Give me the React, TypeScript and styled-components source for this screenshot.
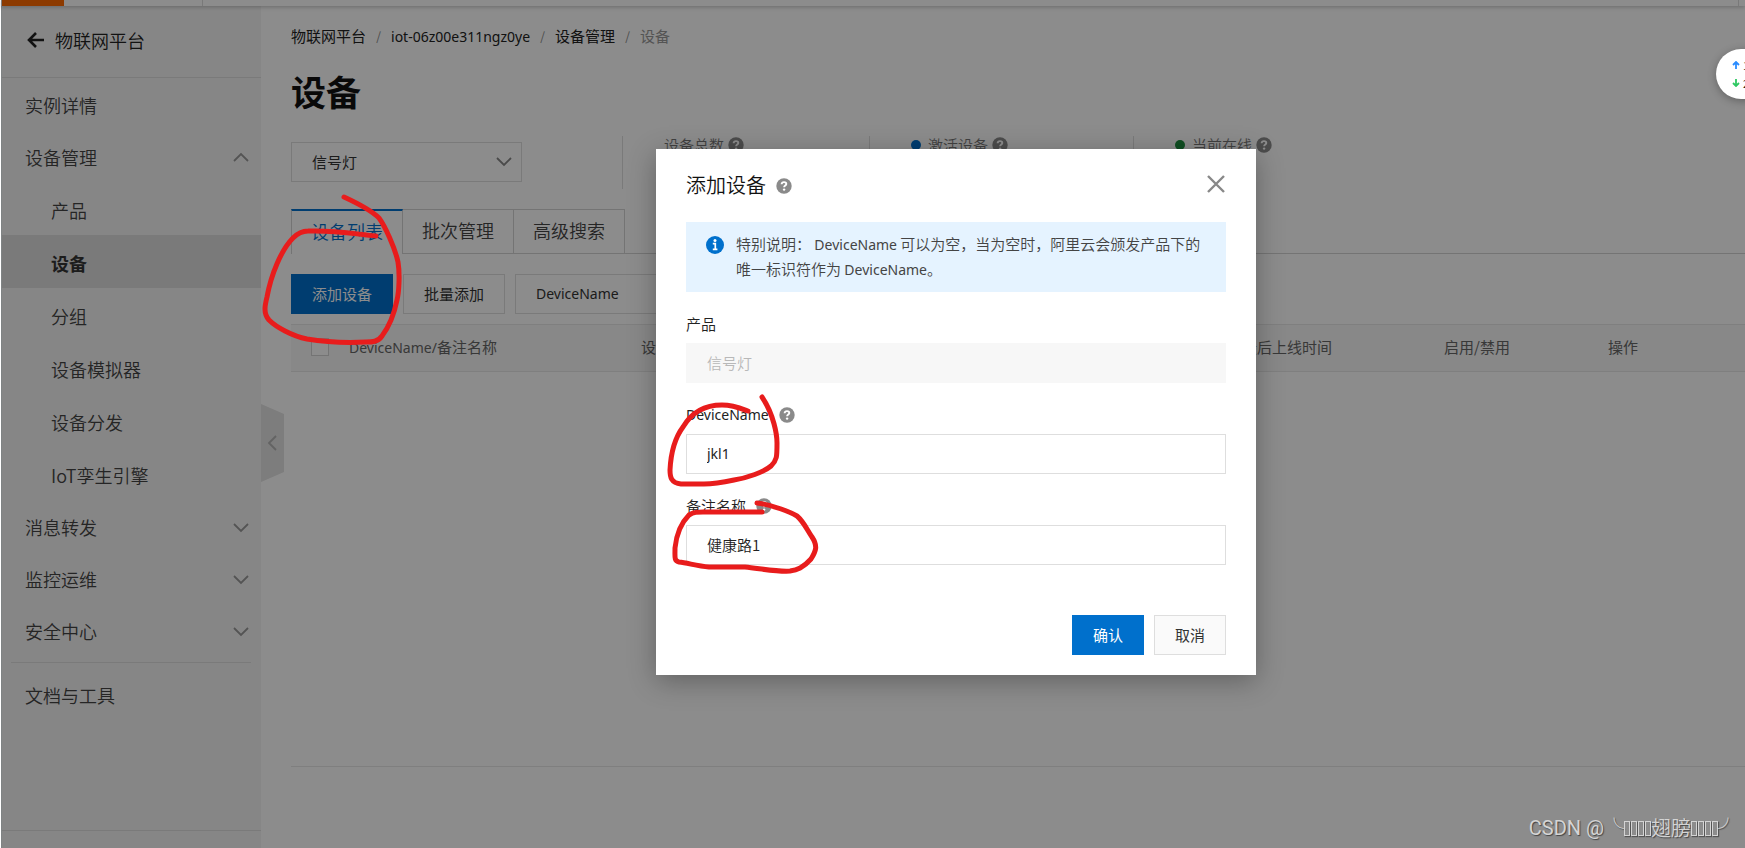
import React, { useState } from 'react';
import styled, { createGlobalStyle, css } from 'styled-components';

const GlobalStyle = createGlobalStyle`
  *, *::before, *::after { box-sizing: border-box; }
  body {
    margin: 0;
    background: #fff;
    color: #222;
    font-family: "Noto Sans CJK SC", sans-serif;
    font-size: 15px;
    font-weight: 350;
    line-height: 24px;
  }
  button, input, select { font: inherit; color: inherit; margin: 0; }
  a { color: inherit; text-decoration: none; }
  h1, h2, p, ul { margin: 0; padding: 0; }
  ul { list-style: none; }
`;

/* ---------- shared ---------- */

const Latin = styled.span`
  font-family: "Noto Sans", sans-serif;
  font-size: 14px;
  font-weight: 400;
  line-height: 1;
`;

const Badge = styled.span`
  display: inline-flex;
  flex: none;
  color: #8a8a8a;
  svg { display: block; }
`;

function HelpIcon({ label }: { label: string }) {
  return (
    <Badge role="img" aria-label={label}>
      <svg width="16" height="16" viewBox="0 0 16 16">
        <circle cx="8" cy="8" r="7.7" fill="currentColor" />
        <path d="M5.600 6.200c.1-1.400 1-2.100 2.400-2.100 1.400 0 2.300.8 2.300 1.900 0 1.500-2.200 1.600-2.200 3.300" fill="none" stroke="#fff" strokeWidth="1.900" />
        <circle cx="8.100" cy="11.600" r="1.200" fill="#fff" />
      </svg>
    </Badge>
  );
}

function Chevron({ dir }: { dir: 'up' | 'down' | 'left' }) {
  const d = { up: 'M1 9 8 2l7 7', down: 'M1 2l7 7 7-7', left: 'M9 1 2 8l7 7' }[dir];
  const side = dir === 'left';
  return (
    <svg width={side ? 11 : 16} height={side ? 16 : 11} viewBox={side ? '0 0 11 16' : '0 0 16 11'} aria-hidden="true">
      <path d={d} fill="none" stroke="currentColor" strokeWidth="1.800" />
    </svg>
  );
}

const Button = styled.button<{ $primary?: boolean; $soft?: boolean }>`
  height: 40px;
  padding: 0 20px;
  border: 1px solid ${p => (p.$primary ? '#0070cc' : '#dedede')};
  background: ${p => (p.$primary ? '#0070cc' : p.$soft ? '#fafafa' : 'transparent')};
  color: ${p => (p.$primary ? '#fff' : '#333')};
  font-weight: 400;
  white-space: nowrap;
  cursor: pointer;
`;

/* ---------- page frame ---------- */

const Page = styled.div`
  position: relative;
  display: flex;
  flex-direction: column;
  min-height: 100vh;
  padding-left: 1px;
  overflow: hidden;
`;

const TopBar = styled.header`
  position: relative;
  display: flex;
  justify-content: space-between;
  height: 6px;
  padding-right: 6px;
  border-left: 1px solid #e6e6e6;
  box-shadow: 0 1px 4px rgba(0, 0, 0, 0.25);
  z-index: 1;
`;

const BrandCell = styled.div`
  width: 201px;
  border-right: 1px solid #dcdcdc;
  &::before {
    content: "";
    display: block;
    width: 62px;
    height: 6px;
    background: #ff6a00;
  }
`;

const UserCell = styled.div`
  border-right: 1px solid #dcdcdc;
`;

const Body = styled.div`
  display: flex;
  flex: 1;
`;

/* ---------- sidebar ---------- */

const Sidebar = styled.nav`
  position: relative;
  display: flex;
  flex-direction: column;
  flex: none;
  width: 260px;
  background: #f5f5f5;
  border-left: 1px solid #e8eef0;
  color: #444;
  font-size: 18px;
`;

const SideTitle = styled.a`
  display: flex;
  align-items: center;
  gap: 10px;
  height: 72px;
  padding: 0 0 3px 25px;
  border-bottom: 1px solid #dedede;
  color: #222;
`;

const SideLink = styled.a<{ $sub?: boolean; $active?: boolean }>`
  display: flex;
  align-items: center;
  justify-content: space-between;
  height: ${p => (p.$sub ? 53 : 52)}px;
  padding: 2px 12px 0 ${p => (p.$sub ? 49 : 23)}px;
  ${p => p.$active && css`
    background: #dedede;
    color: #333;
    font-weight: 700;
  `}
  svg { color: #999; }
`;

const SideRule = styled.hr`
  width: 240px;
  margin: 6px 0 5px 9px;
  border: 0;
  border-top: 1px solid #dedede;
`;

const SideFoot = styled.div`
  height: 18px;
  margin-top: auto;
  border-top: 1px solid #dedede;
`;

const Collapse = styled.button`
  position: absolute;
  top: 398px;
  left: 100%;
  width: 23px;
  height: 78px;
  padding: 0;
  border: 0;
  background: #e3e3e3;
  color: #b4b4b4;
  clip-path: polygon(0 0, 100% 10px, 100% 68px, 0 100%);
`;

const menu = [
  { text: '实例详情' },
  { text: '设备管理', arrow: 'up' as const },
  { text: '产品', sub: true },
  { text: '设备', sub: true, active: true },
  { text: '分组', sub: true },
  { text: '设备模拟器', sub: true },
  { text: '设备分发', sub: true },
  { text: 'IoT孪生引擎', sub: true },
  { text: '消息转发', arrow: 'down' as const },
  { text: '监控运维', arrow: 'down' as const },
  { text: '安全中心', arrow: 'down' as const },
];

/* ---------- main ---------- */

const Main = styled.main`
  flex: 1;
  min-width: 0;
  padding: 18px 0 0 30px;
`;

const Crumbs = styled.nav`
  display: flex;
  align-items: center;
  height: 24px;
  font-weight: 400;
  a:last-child { color: #999; }
`;

const Slash = styled.span`
  width: 25px;
  color: #888;
  font-size: 12px;
  text-align: center;
`;

const Title = styled.h1`
  margin-top: 20px;
  color: #111;
  font-size: 35px;
  font-weight: 700;
  line-height: 46px;
`;

const Overview = styled.div`
  display: flex;
  align-items: flex-start;
  margin-top: 22px;
`;

const SelectBox = styled.div<{ $width: number }>`
  position: relative;
  width: ${p => p.$width}px;
  height: 40px;
  color: #888;
  svg { position: absolute; right: 10px; top: 14px; pointer-events: none; }
`;

const Select = styled.select<{ $latin?: boolean }>`
  appearance: none;
  width: 100%;
  height: 40px;
  padding: 0 36px 0 20px;
  border: 1px solid #dedede;
  border-radius: 0;
  background: transparent;
  color: #333;
  font-weight: 400;
  ${p => p.$latin && css`
    font-family: "Noto Sans", sans-serif;
    font-size: 14px;
  `}
`;

const OverviewSelect = styled.div`
  width: 331px;
  padding-top: 6px;
`;

const Stat = styled.div`
  height: 53px;
  padding: 0 125px 0 41px;
  border-left: 1px solid #dedede;
`;

const StatLabel = styled.div`
  display: flex;
  align-items: center;
  gap: 4px;
  height: 17px;
  color: #777;
  white-space: nowrap;
`;

const Dot = styled.span<{ $color: string }>`
  width: 10px;
  height: 10px;
  margin-right: 3px;
  border-radius: 50%;
  background: ${p => p.$color};
`;

const Tabs = styled.div`
  display: flex;
  margin-top: 20px;
  &::after {
    content: "";
    flex: 1;
    border-bottom: 1px solid #d4d4d4;
  }
`;

const Tab = styled.button<{ $active?: boolean }>`
  width: 111px;
  height: 45px;
  padding: 0 0 3px;
  border: solid #d4d4d4;
  border-width: 1px 1px 1px 0;
  background: none;
  color: #444;
  font-size: 18px;
  white-space: nowrap;
  cursor: pointer;
  ${p => p.$active && css`
    width: 112px;
    border-width: 2px 1px 0;
    border-top-color: #0070cc;
    color: #0070cc;
  `}
`;

const Toolbar = styled.div`
  display: flex;
  gap: 10px;
  margin: 20px 0 10px;
`;

const Devices = styled.table`
  width: 100%;
  table-layout: fixed;
  border-collapse: collapse;
  th {
    height: 47px;
    padding: 0 0 2px 20px;
    border: solid #e8e8e8;
    border-width: 1px 0;
    background: #f7f7f7;
    color: #666;
    font-weight: 400;
    text-align: left;
    white-space: nowrap;
  }
`;

const Check = styled.input`
  appearance: none;
  display: block;
  width: 18px;
  height: 18px;
  margin: 0;
  border: 1px solid #d4d4d4;
  background: #fff;
`;

const TableEnd = styled.div`
  height: 395px;
  border-bottom: 1px solid #e8e8e8;
`;

/* ---------- dialog ---------- */

const Mask = styled.div`
  position: absolute;
  inset: 0 0 0 1px;
  z-index: 2;
  display: flex;
  align-items: center;
  justify-content: center;
  padding: 0 0 24px 166px;
  background: rgba(0, 0, 0, 0.45);
`;

const Dialog = styled.section`
  width: 600px;
  padding: 20px 30px;
  background: #fff;
  box-shadow: 0 6px 26px rgba(0, 0, 0, 0.3);
`;

const DialogHead = styled.header`
  display: flex;
  align-items: center;
  gap: 10px;
  height: 33px;
  margin-bottom: 20px;
`;

const DialogTitle = styled.h2`
  padding-bottom: 2px;
  color: #111;
  font-size: 20px;
  font-weight: 350;
`;

const Close = styled.button`
  display: flex;
  margin-left: auto;
  padding: 0 0 3px;
  border: 0;
  background: none;
  color: #888;
  cursor: pointer;
`;

const Notice = styled.div`
  display: flex;
  gap: 12px;
  height: 70px;
  padding: 9px 20px 0;
  margin-bottom: 20px;
  background: #e5f3ff;
  color: #444;
  line-height: 25px;
  svg { flex: none; margin-top: 5px; }
`;

const Field = styled.div`
  margin-bottom: 20px;
`;

const FieldLabel = styled.label`
  display: flex;
  align-items: center;
  gap: 10px;
  height: 25px;
  padding-bottom: 1px;
  margin-bottom: 6px;
`;

const TextInput = styled.input<{ $latin?: boolean }>`
  display: block;
  width: 100%;
  height: 40px;
  padding: 0 20px 2px;
  border: 1px solid #dedede;
  background: #fff;
  outline: 0;
  ${p => p.$latin && css`
    font-family: "Noto Sans", sans-serif;
    font-size: 14px;
    font-weight: 400;
  `}
  &:disabled {
    border-color: #f7f7f7;
    background: #f7f7f7;
    color: #b8b8b8;
  }
`;

const DialogFoot = styled.footer`
  display: flex;
  justify-content: flex-end;
  gap: 10px;
  padding-top: 30px;
`;

/* ---------- things floating over the page ---------- */

const SpeedPill = styled.aside`
  position: absolute;
  top: 49px;
  right: -41px;
  z-index: 3;
  display: flex;
  flex-direction: column;
  justify-content: center;
  width: 70px;
  height: 50px;
  padding-left: 16px;
  border-radius: 25px;
  background: #fff;
  box-shadow: 0 2px 8px rgba(0, 0, 0, 0.3);
  font-size: 11px;
  line-height: 18px;
`;

const Speed = styled.div<{ $color: string }>`
  display: flex;
  align-items: center;
  gap: 3px;
  svg { color: ${p => p.$color}; }
`;

const Marks = styled.svg`
  position: absolute;
  top: 0;
  left: 0;
  z-index: 4;
  pointer-events: none;
`;

const Watermark = styled.div`
  position: absolute;
  right: 7px;
  bottom: 6px;
  z-index: 4;
  display: flex;
  align-items: center;
  color: #d4d4d4;
  font-size: 20px;
  font-weight: 350;
  line-height: 28px;
  text-shadow: 1px 1px 1px #444;
`;

const Brand = styled.span`
  font-family: Roboto, sans-serif;
  font-weight: 400;
`;

const MissingGlyphs = styled.span`
  display: flex;
  gap: 1px;
  i {
    width: 6px;
    height: 15px;
    border: 1px solid #d4d4d4;
    box-shadow: 1px 1px 1px #555;
  }
`;

function Missing() {
  return <MissingGlyphs aria-hidden="true"><i /><i /><i /><i /></MissingGlyphs>;
}

export default function App() {
  const [name, setName] = useState('jkl1');
  const [note, setNote] = useState('健康路1');

  return (
    <>
      <GlobalStyle />
      <Page>
        <TopBar>
          <BrandCell />
          <UserCell />
        </TopBar>
        <Body>
          <Sidebar>
            <SideTitle href="#">
              <svg width="18" height="18" viewBox="0 0 18 18" aria-hidden="true">
                <path d="M17 9H2.500M9 2 2 9l7 7" fill="none" stroke="currentColor" strokeWidth="2.600" />
              </svg>
              物联网平台
            </SideTitle>
            <ul>
              {menu.map(m => (
                <li key={m.text}>
                  <SideLink href="#" $sub={m.sub} $active={m.active}>
                    {m.text}
                    {m.arrow && <Chevron dir={m.arrow} />}
                  </SideLink>
                </li>
              ))}
            </ul>
            <SideRule />
            <SideLink href="#">文档与工具</SideLink>
            <SideFoot />
            <Collapse aria-label="收起菜单"><Chevron dir="left" /></Collapse>
          </Sidebar>

          <Main>
            <Crumbs>
              <a href="#">物联网平台</a>
              <Slash>/</Slash>
              <a href="#"><Latin>iot-06z00e311ngz0ye</Latin></a>
              <Slash>/</Slash>
              <a href="#">设备管理</a>
              <Slash>/</Slash>
              <a href="#">设备</a>
            </Crumbs>
            <Title>设备</Title>

            <Overview>
              <OverviewSelect>
                <SelectBox $width={231}>
                  <Select aria-label="产品"><option>信号灯</option></Select>
                  <Chevron dir="down" />
                </SelectBox>
              </OverviewSelect>
              <Stat>
                <StatLabel>设备总数<HelpIcon label="设备总数说明" /></StatLabel>
              </Stat>
              <Stat>
                <StatLabel><Dot $color="#0070cc" />激活设备<HelpIcon label="激活设备说明" /></StatLabel>
              </Stat>
              <Stat>
                <StatLabel><Dot $color="#1e8e3e" />当前在线<HelpIcon label="当前在线说明" /></StatLabel>
              </Stat>
            </Overview>

            <Tabs>
              <Tab $active>设备列表</Tab>
              <Tab>批次管理</Tab>
              <Tab>高级搜索</Tab>
            </Tabs>

            <Toolbar>
              <Button $primary>添加设备</Button>
              <Button>批量添加</Button>
              <SelectBox $width={180}>
                <Select $latin aria-label="搜索字段"><option>DeviceName</option></Select>
                <Chevron dir="down" />
              </SelectBox>
            </Toolbar>

            <Devices>
              <colgroup>
                <col style={{ width: 38 }} />
                <col style={{ width: 292 }} />
                <col style={{ width: 601 }} />
                <col style={{ width: 202 }} />
                <col style={{ width: 164 }} />
                <col />
              </colgroup>
              <thead>
                <tr>
                  <th><Check type="checkbox" aria-label="全选" /></th>
                  <th><Latin>DeviceName/</Latin>备注名称</th>
                  <th>设备所属产品</th>
                  <th>最后上线时间</th>
                  <th>启用/禁用</th>
                  <th>操作</th>
                </tr>
              </thead>
            </Devices>
            <TableEnd />
          </Main>
        </Body>

        <Mask>
          <Dialog role="dialog" aria-labelledby="dialog-title">
            <DialogHead>
              <DialogTitle id="dialog-title">添加设备</DialogTitle>
              <HelpIcon label="添加设备说明" />
              <Close aria-label="关闭">
                <svg width="20" height="20" viewBox="0 0 20 20">
                  <path d="M2 2l16 16M18 2 2 18" stroke="currentColor" strokeWidth="2.400" />
                </svg>
              </Close>
            </DialogHead>
            <Notice>
              <svg width="18" height="18" viewBox="0 0 18 18" aria-hidden="true">
                <circle cx="9" cy="9" r="9" fill="#0070cc" />
                <circle cx="9" cy="4.600" r="1.500" fill="#fff" />
                <path d="M6.800 7.700h2.500v5.300M6.800 13.400h4.600" fill="none" stroke="#fff" strokeWidth="1.700" />
              </svg>
              <p>
                特别说明： <Latin>DeviceName</Latin> 可以为空，当为空时，阿里云会颁发产品下的唯一标识符作为 <Latin>DeviceName</Latin>。
              </p>
            </Notice>
            <Field>
              <FieldLabel htmlFor="product">产品</FieldLabel>
              <TextInput id="product" disabled value="信号灯" />
            </Field>
            <Field>
              <FieldLabel htmlFor="name"><Latin>DeviceName</Latin><HelpIcon label="DeviceName说明" /></FieldLabel>
              <TextInput id="name" $latin value={name} onChange={e => setName(e.target.value)} />
            </Field>
            <Field>
              <FieldLabel htmlFor="note">备注名称<HelpIcon label="备注名称说明" /></FieldLabel>
              <TextInput id="note" value={note} onChange={e => setNote(e.target.value)} />
            </Field>
            <DialogFoot>
              <Button $primary>确认</Button>
              <Button $soft>取消</Button>
            </DialogFoot>
          </Dialog>
        </Mask>

        <SpeedPill>
          <Speed $color="#2a8cff">
            <svg width="8" height="8" viewBox="0 0 8 8"><path d="M4 8V1M1 4l3-3 3 3" fill="none" stroke="currentColor" strokeWidth="1.800" /></svg>
            1
          </Speed>
          <Speed $color="#2fc863">
            <svg width="8" height="8" viewBox="0 0 8 8"><path d="M4 0v7M1 4l3 3 3-3" fill="none" stroke="currentColor" strokeWidth="1.800" /></svg>
            2
          </Speed>
        </SpeedPill>

        <Marks width="840" height="600" viewBox="0 0 840 600" fill="none" stroke="#e81c1c" strokeWidth="5" strokeLinecap="round" strokeLinejoin="round" aria-hidden="true">
          <path d="M344 197C357 203 373 212 379 218C385 226 395 248 398 262C400 274 399 292 397 300C394 315 388 328 382 336C378 342 372 342 366 342C345 343 325 342 307 339C292 336 276 327 269 320C263 313 265 305 267 297C271 275 281 250 293 238C299 232 303 231 308 231C335 230 355 234 376 236" />
          <path d="M762 397C774 415 777 435 777 443C777 457 777 460 771 466C764 472 747 478 734 480C720 483 710 484 704 484H681C671 483 670 477 670 470C671 450 677 435 683 427C693 410 708 405 722 405C733 405 740 408 748 411" />
          <path d="M757 503C773 505 790 512 797 516C804 522 807 530 812 537C818 546 816 551 811 559C803 568 797 570 790 571C779 572 763 569 745 567H709C697 566 688 563 679 562C674 561 675 557 675 548C677 529 684 520 689 515C694 512 697 512 703 512H762" />
        </Marks>

        <Watermark>
          <Brand>CSDN @</Brand>
          <span>╰</span>
          <Missing />
          <span>翅膀</span>
          <Missing />
          <span>╯</span>
        </Watermark>
      </Page>
    </>
  );
}
